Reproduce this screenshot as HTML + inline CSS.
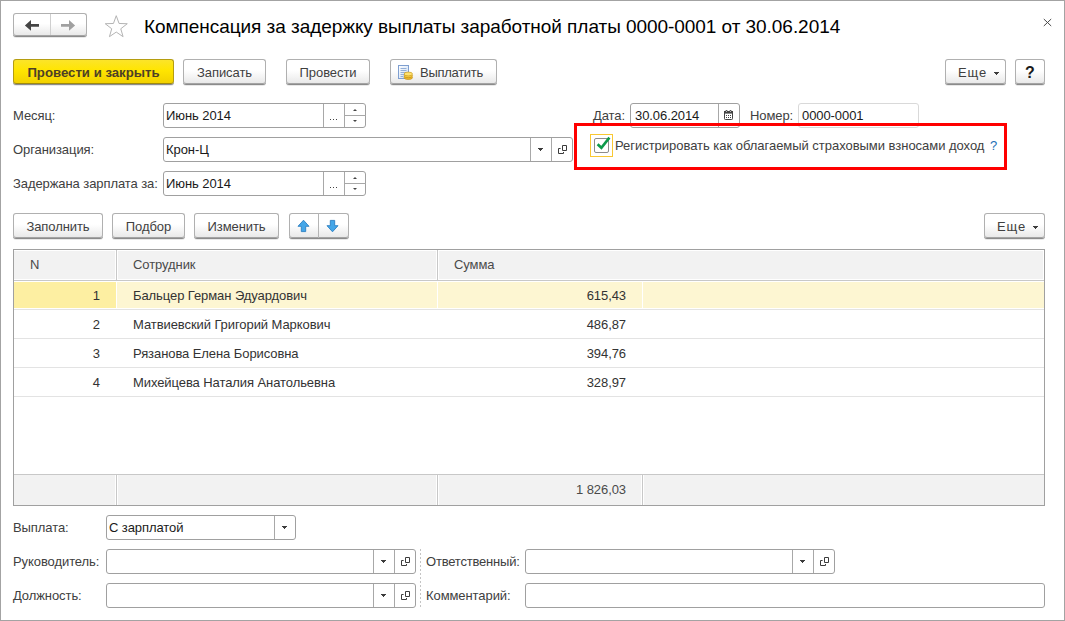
<!DOCTYPE html>
<html lang="ru">
<head>
<meta charset="utf-8">
<title>Компенсация за задержку выплаты заработной платы</title>
<style>
html,body{margin:0;padding:0;}
body{width:1065px;height:621px;overflow:hidden;background:#fff;font-family:"Liberation Sans",Arial,sans-serif;font-size:13px;color:#333;position:relative;letter-spacing:-0.08px;}
#win{position:absolute;left:0;top:0;width:1065px;height:621px;background:#fff;}
#frame{position:absolute;left:0;top:0;width:1063px;height:619px;border:1px solid #a3a3a3;pointer-events:none;}
.abs{position:absolute;}
.title{position:absolute;left:144px;top:16px;font-size:19px;line-height:22px;color:#000;white-space:nowrap;letter-spacing:-0.05px;}
.btn{position:absolute;box-sizing:border-box;height:25px;border:1px solid #b0b0b0;border-bottom-color:#a4a4a4;border-radius:3px;background:linear-gradient(#ffffff 0%,#ffffff 45%,#e9e9e9 100%);box-shadow:0 1px 0 rgba(0,0,0,.40),0 2px 0 rgba(0,0,0,.09);text-align:center;line-height:25px;color:#3f3f3f;white-space:nowrap;}
.btn.y{background:linear-gradient(#fbe42a 0%,#ffe500 45%,#f2d100 100%);border-color:#b59d10;border-bottom-color:#a08a0c;color:#4d4026;font-weight:bold;font-size:13.2px;letter-spacing:0;}
.lbl{position:absolute;line-height:15px;color:#404040;white-space:nowrap;}
.inp{position:absolute;box-sizing:border-box;height:25px;border:1px solid #a0a0a0;border-radius:3px;background:#fff;line-height:22px;padding-left:2px;padding-top:1px;color:#1a1a1a;white-space:nowrap;}
.inp .sep{position:absolute;top:0;bottom:0;width:1px;background:#a8a8a8;}
.tri{position:absolute;width:0;height:0;border-left:3px solid transparent;border-right:3px solid transparent;border-top:3px solid #444;}
.dots{position:absolute;top:15px;width:7px;height:1px;background:linear-gradient(90deg,#444 0 1px,transparent 1px 3px,#444 3px 4px,transparent 4px 6px,#444 6px 7px);}
.tri.up{border-top:none;border-bottom:2px solid #444;border-left-width:2px;border-right-width:2px;}
.tri.dn{border-top-width:2px;border-left-width:2px;border-right-width:2px;}
.hdr{background:#f2f2f2;}
.th{line-height:15px;color:#4a4a4a;white-space:nowrap;}
.vline{width:1px;background:#c8c8c8;box-shadow:-1px 0 0 #fff,1px 0 0 #fff;}
.row{position:absolute;left:14px;width:1030px;height:28px;border-bottom:1px solid #e3e3e3;line-height:28px;color:#333;white-space:nowrap;}
.row .c{position:absolute;top:0;height:28px;box-sizing:border-box;line-height:30px;}
.row .c1{left:0;width:102px;text-align:right;padding-right:16px;}
.row .c2{left:103px;width:320px;padding-left:16px;}
.row .c3{left:424px;width:204px;text-align:right;padding-right:16px;}
.row .c4{left:629px;width:401px;}
.row.sel{}
.row.sel .c{background:linear-gradient(#fff 0 1px,#fdf6d2 1px 27px,#fff 27px 28px);}
.row.sel .c1{background:linear-gradient(#fff 0 1px,#fdefa2 1px 27px,#fff 27px 28px);}
.tri.s{border-left-width:3px;border-right-width:3px;border-top-width:3px;transform:scaleX(.9);transform-origin:0 0;}
</style>
</head>
<body>
<div id="win">
<div id="frame"></div>

<!-- nav buttons -->
<div class="btn" style="left:13px;top:13px;width:74px;height:23px;"></div>
<div class="abs" style="left:50px;top:14px;width:1px;height:21px;background:#cfcfcf;"></div>
<svg class="abs" style="left:24px;top:19px" width="16" height="13" viewBox="0 0 16 13"><path d="M0.9 6.4 L7 1 L7 5 L15 5 L15 7.8 L7 7.8 L7 11.8 Z" fill="#444"/></svg>
<svg class="abs" style="left:60px;top:19px" width="16" height="13" viewBox="0 0 16 13"><path d="M15.1 6.4 L9 1 L9 5 L1 5 L1 7.8 L9 7.8 L9 11.8 Z" fill="#a0a0a0"/></svg>

<!-- star -->
<svg class="abs" style="left:104px;top:14px" width="25" height="25" viewBox="0 0 25 25"><path d="M12.25 1.70 L15.04 9.46 L23.28 9.72 L16.77 14.77 L19.07 22.68 L12.25 18.05 L5.43 22.68 L7.73 14.77 L1.22 9.72 L9.46 9.46 Z" fill="#fff" stroke="#b4b4b4" stroke-width="1"/></svg>

<div class="title">Компенсация за задержку выплаты заработной платы 0000-0001 от 30.06.2014</div>
<svg class="abs" style="left:1043px;top:18px" width="9" height="9" viewBox="0 0 9 9"><path d="M0.8 1 L8.2 8 M8.2 1 L0.8 8" stroke="#4a4a4a" stroke-width="1" fill="none"/></svg>

<!-- main toolbar -->
<div class="btn y" style="left:13px;top:59px;width:161px;">Провести и закрыть</div>
<div class="btn" style="left:183px;top:59px;width:83px;">Записать</div>
<div class="btn" style="left:286px;top:59px;width:84px;">Провести</div>
<div class="btn" style="left:390px;top:59px;width:107px;padding-left:16px;letter-spacing:-0.3px;">Выплатить</div>
<svg class="abs" style="left:397px;top:64px" width="17" height="17" viewBox="0 0 17 17">
<defs><linearGradient id="dg" x1="0" y1="0" x2="1" y2="1"><stop offset="0" stop-color="#ffffff"/><stop offset="1" stop-color="#c9dcf3"/></linearGradient></defs>
<rect x="1.5" y="1.5" width="10" height="13" fill="url(#dg)" stroke="#7f9fd0" stroke-width="1"/>
<path d="M3.5 4.5 H9.5 M3.5 6.5 H9.5 M3.5 8.5 H9.5 M3.5 10.5 H7.5 M3.5 12.5 H6.5" stroke="#93afd8" stroke-width="1" fill="none"/>
<ellipse cx="11.3" cy="13.6" rx="4.2" ry="1.9" fill="#efb92a" stroke="#c08e12" stroke-width=".7"/>
<ellipse cx="11.3" cy="11.8" rx="4.2" ry="1.9" fill="#f7cc40" stroke="#c08e12" stroke-width=".7"/>
<ellipse cx="11.3" cy="10" rx="4.2" ry="1.9" fill="#ffe270" stroke="#c99a1c" stroke-width=".7"/>
</svg>
<div class="btn" style="left:945px;top:59px;width:61px;padding-right:6px;letter-spacing:0.8px;">Еще</div>
<svg class="abs" style="left:994px;top:72px" width="5" height="3" viewBox="0 0 5 3" shape-rendering="crispEdges"><path d="M0 0h5v1h-1v1h-1v1h-1v-1h-1v-1h-1z" fill="#3c3c3c"/></svg>
<div class="btn" style="left:1015px;top:59px;width:30px;font-weight:bold;font-size:16px;color:#1a1a1a;letter-spacing:0;">?</div>

<!-- header fields -->
<div class="lbl" style="left:13px;top:108px;">Месяц:</div>
<div class="inp" style="left:163px;top:103px;width:203px;">Июнь 2014
  <div class="sep" style="left:159px;"></div><div class="sep" style="left:180px;"></div>
  <div class="abs" style="left:181px;top:11px;width:21px;height:1px;background:#a8a8a8;"></div>
  <div class="dots" style="left:166px;"></div>
  <div class="tri up" style="left:188.5px;top:5px;"></div><div class="tri dn" style="left:188.5px;top:16px;"></div>
</div>
<div class="lbl" style="left:13px;top:142px;">Организация:</div>
<div class="inp" style="left:163px;top:137px;width:410px;">Крон-Ц
  <div class="sep" style="left:366px;"></div><div class="sep" style="left:387px;"></div>
  <svg class="abs" style="left:374px;top:10px" width="5" height="3" viewBox="0 0 5 3" shape-rendering="crispEdges"><path d="M0 0h5v1h-1v1h-1v1h-1v-1h-1v-1h-1z" fill="#3c3c3c"/></svg>
  <svg class="abs" style="left:394px;top:7px" width="10" height="10" viewBox="0 0 10 10"><path d="M4.5 0.5 H8.5 V5.5 H4.5 Z M2.6 3.5 H0.5 V8.5 H5.5 V7" fill="none" stroke="#3c3c3c" stroke-width="1"/></svg>
</div>
<div class="lbl" style="left:13px;top:176px;">Задержана зарплата за:</div>
<div class="inp" style="left:163px;top:171px;width:203px;">Июнь 2014
  <div class="sep" style="left:159px;"></div><div class="sep" style="left:180px;"></div>
  <div class="abs" style="left:181px;top:11px;width:21px;height:1px;background:#a8a8a8;"></div>
  <div class="dots" style="left:166px;"></div>
  <div class="tri up" style="left:188.5px;top:5px;"></div><div class="tri dn" style="left:188.5px;top:16px;"></div>
</div>

<div class="lbl" style="left:593px;top:108px;">Дата:</div>
<div class="inp" style="left:630px;top:103px;width:110px;padding-left:4px;">30.06.2014
  <div class="sep" style="left:87px;"></div>
  <svg class="abs" style="left:93px;top:6px" width="9" height="10" viewBox="0 0 9 10"><rect x="0.5" y="1.5" width="8" height="8" rx="0.8" fill="#fff" stroke="#444"/><rect x="0" y="1" width="9" height="2.6" fill="#444"/><rect x="1.7" y="0" width="1.6" height="1.5" fill="#444"/><rect x="5.7" y="0" width="1.6" height="1.5" fill="#444"/><rect x="2.1" y="0.9" width="0.8" height="0.9" fill="#fff"/><rect x="6.1" y="0.9" width="0.8" height="0.9" fill="#fff"/><g fill="#444"><rect x="2" y="5" width="1" height="1"/><rect x="4" y="5" width="1" height="1"/><rect x="6" y="5" width="1" height="1"/><rect x="2" y="7" width="1" height="1"/><rect x="4" y="7" width="1" height="1"/><rect x="6" y="7" width="1" height="1"/></g></svg>
</div>
<div class="lbl" style="left:750px;top:108px;">Номер:</div>
<div class="inp" style="left:798px;top:103px;width:121px;border-color:#d9d9d9;padding-left:3px;">0000-0001</div>

<!-- red highlight -->
<div class="abs" style="left:574px;top:123px;width:427px;height:41px;border:3px solid #ff0000;"></div>
<div class="abs" style="left:590px;top:134px;width:21px;height:21px;border:1px solid #f9c833;"></div>
<div class="abs" style="left:594px;top:138px;width:13px;height:13px;border:1px solid #8c8c8c;border-radius:2px;background:#fff;"></div>
<svg class="abs" style="left:595px;top:135px" width="17" height="16" viewBox="0 0 17 16"><path d="M2.6 9.2 L6.4 12.8 L14.4 2.6" fill="none" stroke="#0d9a4a" stroke-width="2.6" stroke-linejoin="miter"/></svg>
<div class="lbl" style="left:615px;top:138px;letter-spacing:-0.03px;">Регистрировать как облагаемый страховыми взносами доход</div>
<div class="lbl" style="left:990px;top:138px;color:#1d6fb5;">?</div>

<!-- table toolbar -->
<div class="btn" style="left:13px;top:213px;width:90px;">Заполнить</div>
<div class="btn" style="left:112px;top:213px;width:73px;">Подбор</div>
<div class="btn" style="left:194px;top:213px;width:85px;">Изменить</div>
<div class="btn" style="left:289px;top:213px;width:60px;"></div>
<div class="abs" style="left:318px;top:213px;width:1px;height:25px;background:#b4b4b4;"></div>
<svg class="abs" style="left:297px;top:219px" width="13" height="14" viewBox="0 0 13 14"><path d="M6.5 1.2 L12 7.3 H8.7 V12.6 H4.3 V7.3 H1 Z" fill="#44a6e8" stroke="#2b7fc2" stroke-width="0.9" stroke-linejoin="round"/></svg>
<svg class="abs" style="left:326px;top:219px" width="13" height="14" viewBox="0 0 13 14"><path d="M6.5 12.8 L12 6.7 H8.7 V1.4 H4.3 V6.7 H1 Z" fill="#44a6e8" stroke="#2b7fc2" stroke-width="0.9" stroke-linejoin="round"/></svg>
<div class="btn" style="left:984px;top:213px;width:61px;padding-right:6px;letter-spacing:0.8px;">Еще</div>
<svg class="abs" style="left:1033px;top:226px" width="5" height="3" viewBox="0 0 5 3" shape-rendering="crispEdges"><path d="M0 0h5v1h-1v1h-1v1h-1v-1h-1v-1h-1z" fill="#3c3c3c"/></svg>

<!-- table -->
<div class="abs" style="left:13px;top:249px;width:1030px;height:255px;border:1px solid #a0a0a0;background:#fff;"></div>
<div class="abs hdr" style="left:14px;top:251px;width:1029px;height:28px;"></div>
<div class="abs" style="left:14px;top:279px;width:1030px;height:1px;background:#fff;"></div>
<div class="abs" style="left:14px;top:280px;width:1030px;height:1px;background:#c8c8c8;"></div>
<div class="abs th" style="left:30px;top:257px;">N</div>
<div class="abs th" style="left:133px;top:257px;">Сотрудник</div>
<div class="abs th" style="left:454px;top:257px;">Сумма</div>
<div class="abs vline" style="left:116px;top:250px;height:30px;"></div>
<div class="abs vline" style="left:437px;top:250px;height:30px;"></div>
<div class="row sel" style="top:281px;"><div class="c c1">1</div><div class="c c2">Бальцер Герман Эдуардович</div><div class="c c3">615,43</div><div class="c c4"></div></div>
<div class="row" style="top:310px;"><div class="c c1">2</div><div class="c c2">Матвиевский Григорий Маркович</div><div class="c c3">486,87</div><div class="c c4"></div></div>
<div class="row" style="top:339px;"><div class="c c1">3</div><div class="c c2">Рязанова Елена Борисовна</div><div class="c c3">394,76</div><div class="c c4"></div></div>
<div class="row" style="top:368px;"><div class="c c1">4</div><div class="c c2">Михейцева Наталия Анатольевна</div><div class="c c3">328,97</div><div class="c c4"></div></div>

<div class="abs" style="left:14px;top:474px;width:1030px;height:1px;background:#c8c8c8;"></div>
<div class="abs hdr" style="left:14px;top:475px;width:1030px;height:30px;"></div>
<div class="abs vline" style="left:116px;top:475px;height:30px;"></div>
<div class="abs vline" style="left:437px;top:475px;height:30px;"></div>
<div class="abs vline" style="left:642px;top:475px;height:30px;"></div>
<div class="abs th" style="left:438px;top:482px;width:188px;text-align:right;">1 826,03</div>

<!-- bottom fields -->
<div class="lbl" style="left:13px;top:520px;">Выплата:</div>
<div class="inp" style="left:106px;top:515px;width:190px;">С зарплатой
  <div class="sep" style="left:167px;"></div><svg class="abs" style="left:175px;top:10px" width="5" height="3" viewBox="0 0 5 3" shape-rendering="crispEdges"><path d="M0 0h5v1h-1v1h-1v1h-1v-1h-1v-1h-1z" fill="#3c3c3c"/></svg>
</div>
<div class="lbl" style="left:13px;top:554px;">Руководитель:</div>
<div class="inp" style="left:106px;top:549px;width:310px;">
  <div class="sep" style="left:266px;"></div><div class="sep" style="left:287px;"></div>
  <svg class="abs" style="left:274px;top:10px" width="5" height="3" viewBox="0 0 5 3" shape-rendering="crispEdges"><path d="M0 0h5v1h-1v1h-1v1h-1v-1h-1v-1h-1z" fill="#3c3c3c"/></svg>
  <svg class="abs" style="left:294px;top:7px" width="10" height="10" viewBox="0 0 10 10"><path d="M4.5 0.5 H8.5 V5.5 H4.5 Z M2.6 3.5 H0.5 V8.5 H5.5 V7" fill="none" stroke="#3c3c3c" stroke-width="1"/></svg>
</div>
<div class="lbl" style="left:13px;top:588px;">Должность:</div>
<div class="inp" style="left:106px;top:583px;width:310px;">
  <div class="sep" style="left:266px;"></div><div class="sep" style="left:287px;"></div>
  <svg class="abs" style="left:274px;top:10px" width="5" height="3" viewBox="0 0 5 3" shape-rendering="crispEdges"><path d="M0 0h5v1h-1v1h-1v1h-1v-1h-1v-1h-1z" fill="#3c3c3c"/></svg>
  <svg class="abs" style="left:294px;top:7px" width="10" height="10" viewBox="0 0 10 10"><path d="M4.5 0.5 H8.5 V5.5 H4.5 Z M2.6 3.5 H0.5 V8.5 H5.5 V7" fill="none" stroke="#3c3c3c" stroke-width="1"/></svg>
</div>
<div class="abs" style="left:420px;top:549px;width:1px;height:58px;background:repeating-linear-gradient(#c4c4c4 0 2px,transparent 2px 4px);"></div>
<div class="lbl" style="left:426px;top:554px;letter-spacing:-0.2px;">Ответственный:</div>
<div class="inp" style="left:525px;top:549px;width:310px;">
  <div class="sep" style="left:266px;"></div><div class="sep" style="left:287px;"></div>
  <svg class="abs" style="left:274px;top:10px" width="5" height="3" viewBox="0 0 5 3" shape-rendering="crispEdges"><path d="M0 0h5v1h-1v1h-1v1h-1v-1h-1v-1h-1z" fill="#3c3c3c"/></svg>
  <svg class="abs" style="left:294px;top:7px" width="10" height="10" viewBox="0 0 10 10"><path d="M4.5 0.5 H8.5 V5.5 H4.5 Z M2.6 3.5 H0.5 V8.5 H5.5 V7" fill="none" stroke="#3c3c3c" stroke-width="1"/></svg>
</div>
<div class="lbl" style="left:426px;top:588px;">Комментарий:</div>
<div class="inp" style="left:525px;top:583px;width:520px;"></div>

</div>
</body>
</html>
